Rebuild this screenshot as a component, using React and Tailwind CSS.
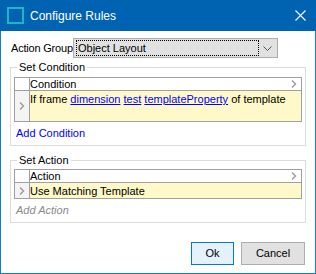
import React from 'react';

const Chevron = ({ className }) => (
  <svg width="6" height="8" viewBox="0 0 6 8" className={className}>
    <path d="M1 0.5 L4.5 4 L1 7.5" fill="none" stroke="#9a9a9a" strokeWidth="1.4" />
  </svg>
);

// grid with a header row and one data row
const RuleGrid = ({ header, rowHeight, children }) => (
  <div className="border border-[#a0a0a0] bg-white">
    <div className="flex h-[13px] border-b border-[#a0a0a0]">
      <div className="w-[15px] border-r border-[#a0a0a0]" />
      <div className="flex-1 flex items-center justify-between pr-[4px] leading-[13px]">
        <span>{header}</span>
        <Chevron />
      </div>
    </div>
    <div className="flex" style={{ height: rowHeight }}>
      <div className="w-[15px] border-r border-[#a0a0a0] bg-[#f4f4f4] flex items-center justify-center">
        <Chevron />
      </div>
      <div className="flex-1 bg-[#fff9c9] leading-[14px] pt-[1px] whitespace-nowrap">{children}</div>
    </div>
  </div>
);

const Link = ({ children }) => (
  <span className="text-[#0000ff] underline">{children}</span>
);

export default function App() {
  return (
    <div
      className="w-[316px] h-[274px] bg-white border-x border-b border-[#1979ca] flex flex-col text-[11px] text-black"
      style={{ fontFamily: '"Liberation Sans", Arial, sans-serif' }}
    >
      {/* Title bar */}
      <div className="h-[31px] -mx-px bg-[#0063b1] flex items-center pl-[7px] pr-[10px] text-white">
        <div className="w-[17px] h-[17px] border-2 border-[#1fb5c8]" />
        <span className="ml-[6px] text-[12px]">Configure Rules</span>
        <svg width="11" height="11" viewBox="0 0 11 11" className="ml-auto">
          <path d="M0.5 0.5 L10.5 10.5 M10.5 0.5 L0.5 10.5" stroke="white" strokeWidth="1.1" />
        </svg>
      </div>

      <div className="flex flex-col pl-[9px] pr-[9px]">
        {/* Action group */}
        <div className="flex items-center mt-[7px] h-[20px]">
          <span className="pl-[1px] w-[63px] whitespace-nowrap tracking-[-0.2px]">Action Group</span>
          <div className="w-[205px] h-[20px] bg-[#e1e1e1] border border-[#adadad] flex items-center pl-[2px] pr-[4px]">
            <div className="w-[183px] h-[16px] border border-dotted border-black flex items-center pl-[1px]">
              Object Layout
            </div>
            <svg width="9" height="5" viewBox="0 0 9 5" className="ml-auto mr-[1px]">
              <path d="M0.5 0.5 L4.5 4.5 L8.5 0.5" fill="none" stroke="#555" strokeWidth="1" />
            </svg>
          </div>
        </div>

        {/* Set Condition */}
        <fieldset className="mt-[3px] border border-[#dcdcdc] px-[3px] pb-[5px] w-[296px]">
          <legend className="ml-[3px] px-[2px] leading-[13px]">Set Condition</legend>
          <div className="mt-[3px]">
            <RuleGrid header="Condition" rowHeight={30}>
              If frame <Link>dimension</Link> <Link>test</Link> <Link>templateProperty</Link> of template
            </RuleGrid>
          </div>
          <div className="mt-[4px] pl-[2px] text-[#0000ff] leading-[14px]">Add Condition</div>
        </fieldset>

        {/* Set Action */}
        <fieldset className="mt-[8px] border border-[#dcdcdc] px-[3px] pb-[5px] w-[296px]">
          <legend className="ml-[3px] px-[2px] leading-[13px]">Set Action</legend>
          <div className="mt-[2px]">
            <RuleGrid header="Action" rowHeight={15}>
              Use Matching Template
            </RuleGrid>
          </div>
          <div className="mt-[4px] pl-[2px] text-[#8a8a8a] italic leading-[14px]">Add Action</div>
        </fieldset>

        {/* Buttons */}
        <div className="flex justify-end gap-[7px] mt-[19px] pr-[1px]">
          <button className="w-[43px] h-[23px] bg-[#e5f1fb] border border-[#0078d7] text-[11px]">Ok</button>
          <button className="w-[64px] h-[23px] bg-[#e1e1e1] border border-[#adadad] text-[11px]">Cancel</button>
        </div>
      </div>
    </div>
  );
}
